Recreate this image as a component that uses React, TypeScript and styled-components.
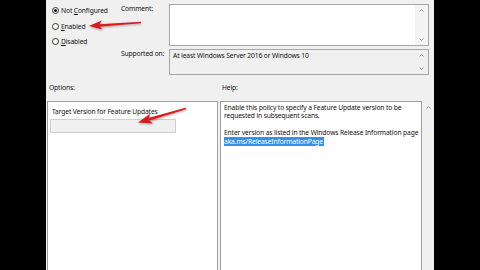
import React from "react";
import styled, { createGlobalStyle } from "styled-components";

const Global = createGlobalStyle`
  html, body { margin: 0; padding: 0; background: #000; }
  body { width: 480px; height: 270px; overflow: hidden; }
`;

const Stage = styled.div`
  position: relative;
  width: 480px;
  height: 270px;
  display: flex;
  justify-content: center;
  background: #000;
  overflow: hidden;
`;

const Dialog = styled.div`
  width: 388px;
  height: 270px;
  background: #f0f0f0;
  display: flex;
  flex-direction: column;
  overflow: hidden;
  font-family: "Noto Sans", "Open Sans", sans-serif;
  font-size: 6.7px;
  letter-spacing: -0.12px;
  line-height: 9px;
  color: #111;
`;

const TopSection = styled.div`
  display: grid;
  grid-template-columns: 75px 48px 260px;
  grid-template-rows: 42px 26px;
  row-gap: 3px;
  padding-top: 4px;
`;

const RadioGroup = styled.div`
  grid-row: 1 / span 2;
  display: flex;
  flex-direction: column;
  gap: 6.5px;
  padding: 2px 0 0 6px;
`;

const RadioRow = styled.label`
  display: flex;
  align-items: center;
  gap: 2px;
  height: 9px;
  white-space: nowrap;
`;

const RadioCircle = styled.span<{ $checked?: boolean }>`
  width: 7px;
  height: 7px;
  box-sizing: border-box;
  border-radius: 50%;
  border: 1px solid #333;
  background: #fff;
  display: flex;
  align-items: center;
  justify-content: center;
  &::after {
    content: "";
    width: 3px;
    height: 3px;
    border-radius: 50%;
    background: ${(p) => (p.$checked ? "#111" : "transparent")};
  }
`;

const Key = styled.span`
  text-decoration: underline;
  text-underline-offset: 1px;
`;

const FieldLabel = styled.div`
  white-space: nowrap;
`;

const Box = styled.div<{ $disabled?: boolean }>`
  box-sizing: border-box;
  border: 1px solid #a6a6a6;
  background: ${(p) => (p.$disabled ? "#f0f0f0" : "#fff")};
  display: flex;
`;

const BoxText = styled.div`
  flex: 1;
  padding: 0.5px 3px;
  white-space: nowrap;
`;

const ScrollBar = styled.div<{ $tint?: boolean }>`
  width: 13px;
  display: flex;
  flex-direction: column;
  justify-content: space-between;
  align-items: center;
  padding: 4px 0 4px;
  box-sizing: border-box;
  background: ${(p) => (p.$tint ? "#f4f4f4" : "transparent")};
`;

const BottomSection = styled.div`
  display: grid;
  grid-template-columns: 171px 214px;
  grid-template-rows: 9px 200px;
  column-gap: 2px;
  row-gap: 9px;
  padding-left: 1px;
  margin-top: 8px;
`;

const SectionLabel = styled.div`
  padding-left: 2px;
`;

const OptionsPanel = styled.div`
  box-sizing: border-box;
  border: 1px solid #a0a0a0;
  border-bottom: none;
  background: #fff;
  padding: 4.5px 0 0 2px;
  display: flex;
  flex-direction: column;
  align-items: flex-start;
`;

const OptionTitle = styled.div`
  margin-left: 2px;
  white-space: nowrap;
`;

const OptionInput = styled.div`
  margin-top: 3.5px;
  width: 126px;
  height: 14px;
  box-sizing: border-box;
  border: 1px solid #cfcfcf;
  background: #f0f0f0;
`;

const HelpPane = styled.div`
  display: flex;
`;

const HelpBox = styled.div`
  flex: 1;
  box-sizing: border-box;
  border: 1px solid #a0a0a0;
  border-bottom: none;
  background: #fff;
  padding: 1.5px 3px;
  line-height: 8.5px;
`;

const HelpPara = styled.p`
  margin: 0 0 8.5px;
  white-space: nowrap;
`;

const Highlight = styled.span`
  background: #3391f0;
  color: #fff;
  padding: 0 1px 0 0;
`;

const HelpScroll = styled.div`
  width: 13px;
  display: flex;
  justify-content: center;
  padding-top: 5px;
  box-sizing: border-box;
`;

const Overlay = styled.svg`
  position: absolute;
  left: 0;
  top: 0;
  pointer-events: none;
`;

const Chevron = ({ up }: { up?: boolean }) => (
  <svg width="5" height="3" viewBox="0 0 5 3">
    <polyline
      points={up ? "0.5,2.5 2.5,0.5 4.5,2.5" : "0.5,0.5 2.5,2.5 4.5,0.5"}
      fill="none"
      stroke="#8a8a8a"
      strokeWidth="0.8"
    />
  </svg>
);

const Radio = ({ checked, pre, k, post }: { checked?: boolean; pre: string; k: string; post: string }) => (
  <RadioRow>
    <RadioCircle $checked={checked} />
    <span>
      {pre}
      <Key>{k}</Key>
      {post}
    </span>
  </RadioRow>
);

export default function App() {
  return (
    <Stage>
      <Global />
      <Dialog>
        <TopSection>
          <RadioGroup>
            <Radio checked pre="Not " k="C" post="onfigured" />
            <Radio pre="" k="E" post="nabled" />
            <Radio pre="" k="D" post="isabled" />
          </RadioGroup>
          <FieldLabel>Comment:</FieldLabel>
          <Box>
            <BoxText />
            <ScrollBar $tint>
              <Chevron up />
              <Chevron />
            </ScrollBar>
          </Box>
          <FieldLabel>Supported on:</FieldLabel>
          <Box $disabled>
            <BoxText>At least Windows Server 2016 or Windows 10</BoxText>
            <ScrollBar>
              <Chevron up />
              <Chevron />
            </ScrollBar>
          </Box>
        </TopSection>
        <BottomSection>
          <SectionLabel>Options:</SectionLabel>
          <SectionLabel>Help:</SectionLabel>
          <OptionsPanel>
            <OptionTitle>Target Version for Feature Updates</OptionTitle>
            <OptionInput />
          </OptionsPanel>
          <HelpPane>
            <HelpBox>
              <HelpPara>
                Enable this policy to specify a Feature Update version to be
                <br />
                requested in subsequent scans.
              </HelpPara>
              <HelpPara>
                Enter version as listed in the Windows Release Information page
                <br />
                <Highlight>aka.ms/ReleaseInformationPage</Highlight>
              </HelpPara>
            </HelpBox>
            <HelpScroll>
              <Chevron up />
            </HelpScroll>
          </HelpPane>
        </BottomSection>
      </Dialog>
      <Overlay width="480" height="270" viewBox="0 0 480 270">
        <defs>
          <filter id="sh" x="-20%" y="-50%" width="140%" height="200%">
            <feDropShadow dx="0.5" dy="1" stdDeviation="0.8" floodColor="#000" floodOpacity="0.35" />
          </filter>
        </defs>
        <g filter="url(#sh)" fill="#d81c1c">
          <polygon points="99,24.2 141,21.8 141,23.3 99,26.8" />
          <polygon points="89,26 101.7,20.6 99,25.3 102.3,29.6" />
          <polygon points="148.3,118 185.6,107.8 186.2,109.2 148.9,120.8" />
          <polygon points="138,122.5 150,113.8 148.6,119.4 152.8,123.4" />
        </g>
      </Overlay>
    </Stage>
  );
}
